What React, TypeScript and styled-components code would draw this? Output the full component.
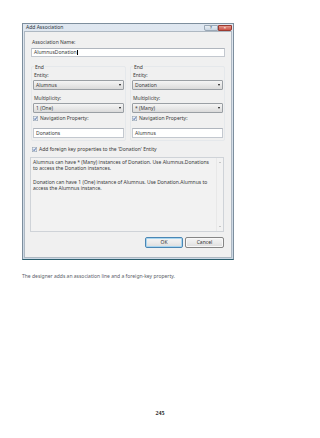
import React from 'react';
import styled, { createGlobalStyle } from 'styled-components';

const Global = createGlobalStyle`
  html, body { margin: 0; padding: 0; background: #ffffff; }
  body { width: 320px; height: 438px; overflow: hidden; font-family: "Noto Sans", "Open Sans", sans-serif; }
  #root { width: 320px; height: 438px; }
`;

const Page = styled.div`
  width: 320px;
  height: 438px;
  box-sizing: border-box;
  padding: 23px 0 22px 0;
  display: flex;
  flex-direction: column;
`;

const Window = styled.div`
  margin-left: 22px;
  width: 212px;
  height: 237px;
  box-sizing: border-box;
  border: 1px solid #7d8e9d;
  border-bottom: 1px solid #2c5f6e;
  background: linear-gradient(#dfe7f0, #cbd8e5);
  display: flex;
  flex-direction: column;
`;

const TitleBar = styled.div`
  height: 7px;
  display: flex;
  align-items: flex-start;
  justify-content: space-between;
  padding: 0 1px 0 3px;
`;

const Title = styled.span`
  font-size: 5px;
  line-height: 7px;
  color: #2a3440;
`;

const Ctrls = styled.div`
  display: flex;
  margin-top: 1px;
`;

const CtrlBtn = styled.div<{ $close?: boolean }>`
  width: 14px;
  height: 6px;
  box-sizing: border-box;
  border: 1px solid ${(p) => (p.$close ? '#9a3a30' : '#9aa8b6')};
  border-radius: ${(p) => (p.$close ? '0 0 2px 0' : '0 0 0 2px')};
  background: ${(p) =>
    p.$close ? 'linear-gradient(#e39a8e, #cc5246)' : 'linear-gradient(#e8eef5, #c9d5e1)'};
  color: ${(p) => (p.$close ? '#ffffff' : '#4e6070')};
  font-size: 4px;
  line-height: 4px;
  text-align: center;
  font-weight: bold;
`;

const Client = styled.div`
  flex: 1;
  margin: 0 1px 1px 1px;
  background: #f0f0f0;
  border: 1px solid #aeb8c2;
  padding: 0 6px 0 6px;
  display: flex;
  flex-direction: column;
  color: #3a3a3a;
`;

const Label = styled.div<{ $mt?: number; $indent?: number }>`
  font-size: 5px;
  line-height: 6px;
  height: 6px;
  white-space: nowrap;
  margin-top: ${(p) => p.$mt ?? 0}px;
  padding-left: ${(p) => p.$indent ?? 1}px;
`;

const TextBox = styled.div<{ $mt?: number; $h?: number }>`
  margin-top: ${(p) => p.$mt ?? 0}px;
  height: ${(p) => p.$h ?? 10}px;
  box-sizing: border-box;
  background: #ffffff;
  border: 1px solid #c3c8cf;
  border-top-color: #b0b6be;
  font-size: 5px;
  line-height: ${(p) => (p.$h ?? 10) - 2}px;
  padding-left: 2px;
  white-space: nowrap;
`;

const Caret = styled.span`
  display: inline-block;
  width: 0.5px;
  height: 5px;
  background: #000;
  vertical-align: middle;
`;

const Groups = styled.div`
  margin-top: 9px;
  display: grid;
  grid-template-columns: 1fr 1fr;
  gap: 4px;
`;

const Group = styled.div`
  border: 1px solid #e5e8eb;
  border-radius: 2px;
  padding: 0 1px 2px 1px;
  display: flex;
  flex-direction: column;
`;

const Legend = styled.div`
  font-size: 5px;
  line-height: 6px;
  height: 6px;
  margin-top: -3px;
  margin-left: 1px;
  padding: 0 1px;
  background: #f0f0f0;
  align-self: flex-start;
`;

const Select = styled.div<{ $mt?: number }>`
  margin-top: ${(p) => p.$mt ?? 0}px;
  height: 10px;
  box-sizing: border-box;
  border: 1px solid #9a9fa4;
  border-radius: 1px;
  background: linear-gradient(#f4f4f4, #e8e8e8 50%, #dadada);
  display: flex;
  align-items: center;
  justify-content: space-between;
  padding: 0 2px 0 2px;
  font-size: 5px;
  white-space: nowrap;
`;

const Arrow = styled.span`
  width: 0;
  height: 0;
  border-left: 1.5px solid transparent;
  border-right: 1.5px solid transparent;
  border-top: 2px solid #111;
`;

const CheckRow = styled.div<{ $mt?: number; $indent?: number }>`
  margin-top: ${(p) => p.$mt ?? 0}px;
  margin-left: ${(p) => p.$indent ?? 0}px;
  height: 6px;
  display: flex;
  align-items: center;
  gap: 2px;
  font-size: 5px;
  white-space: nowrap;
`;

const Description = styled.div`
  margin-top: 5px;
  margin-left: -1px;
  margin-right: 1px;
  height: 75px;
  box-sizing: border-box;
  border: 1px solid #cfd3d8;
  background: #f2f2f2;
  display: flex;
`;

const DescText = styled.div`
  flex: 1;
  padding: 1px 2px;
  font-size: 5px;
  line-height: 6px;
  color: #3a3a3a;
`;

const Para = styled.div`
  margin-bottom: 8px;
  white-space: nowrap;
`;

const Line = styled.div``;

const Scroll = styled.div`
  width: 6px;
  display: flex;
  flex-direction: column;
  justify-content: space-between;
  align-items: center;
  padding: 4px 0 4px 0;
  border-left: 1px solid #e8e8e8;
`;

const ScrollArrow = styled.span<{ $up?: boolean }>`
  width: 0;
  height: 0;
  border-left: 1px solid transparent;
  border-right: 1px solid transparent;
  ${(p) => (p.$up ? 'border-bottom: 1.5px solid #9a9a9a;' : 'border-top: 1.5px solid #9a9a9a;')}
`;

const Buttons = styled.div`
  margin-top: 5px;
  margin-right: 1px;
  display: flex;
  justify-content: flex-end;
  gap: 2px;
`;

const Button = styled.div<{ $default?: boolean; $w: number }>`
  width: ${(p) => p.$w}px;
  height: 11px;
  box-sizing: border-box;
  border: 1px solid ${(p) => (p.$default ? '#4a86b4' : '#858585')};
  border-radius: 2px;
  background: linear-gradient(#f4f4f4, #ebebeb 50%, #dcdcdc);
  box-shadow: ${(p) => (p.$default ? 'inset 0 0 0 1px #a9d6f0' : 'inset 0 0 0 1px #f8f8f8')};
  font-size: 5px;
  line-height: 9px;
  text-align: center;
  color: #333;
`;

const Caption = styled.div`
  margin: 13px 0 0 22px;
  font-size: 5px;
  line-height: 6px;
  color: #5a6068;
  white-space: nowrap;
`;

const PageNumber = styled.div`
  margin-top: auto;
  text-align: center;
  font-family: "Liberation Serif", serif;
  font-weight: bold;
  font-size: 6px;
  line-height: 6px;
  color: #222;
`;

const CheckIcon = () => (
  <svg width="5" height="5" viewBox="0 0 10 10">
    <rect x="0.5" y="0.5" width="9" height="9" fill="#e9eef5" stroke="#8a98a8" />
    <path d="M2.3 5.2 L4.2 7.2 L7.8 2.6" fill="none" stroke="#34589a" strokeWidth="1.8" />
  </svg>
);

type EndProps = { entity: string; mult: string; nav: string };

const EndGroup = ({ entity, mult, nav }: EndProps) => (
  <Group>
    <Legend>End</Legend>
    <Label $mt={2}>Entity:</Label>
    <Select $mt={2}>
      <span>{entity}</span>
      <Arrow />
    </Select>
    <Label $mt={5}>Multiplicity:</Label>
    <Select $mt={2}>
      <span>{mult}</span>
      <Arrow />
    </Select>
    <CheckRow $mt={2}>
      <CheckIcon />
      <span>Navigation Property:</span>
    </CheckRow>
    <TextBox $mt={7} $h={10}>
      {nav}
    </TextBox>
  </Group>
);

export default function App() {
  return (
    <>
      <Global />
      <Page>
        <Window>
          <TitleBar>
            <Title>Add Association</Title>
            <Ctrls>
              <CtrlBtn>?</CtrlBtn>
              <CtrlBtn $close>×</CtrlBtn>
            </Ctrls>
          </TitleBar>
          <Client>
            <Label $mt={7}>Association Name:</Label>
            <TextBox $mt={3} $h={9}>
              AlumnusDonation
              <Caret />
            </TextBox>
            <Groups>
              <EndGroup entity="Alumnus" mult="1 (One)" nav="Donations" />
              <EndGroup entity="Donation" mult="* (Many)" nav="Alumnus" />
            </Groups>
            <CheckRow $mt={5} $indent={1}>
              <CheckIcon />
              <span>Add foreign key properties to the 'Donation' Entity</span>
            </CheckRow>
            <Description>
              <DescText>
                <Para>
                  <Line>Alumnus can have * (Many) instances of Donation. Use Alumnus.Donations</Line>
                  <Line>to access the Donation instances.</Line>
                </Para>
                <Para>
                  <Line>Donation can have 1 (One) instance of Alumnus. Use Donation.Alumnus to</Line>
                  <Line>access the Alumnus instance.</Line>
                </Para>
              </DescText>
              <Scroll>
                <ScrollArrow $up />
                <ScrollArrow />
              </Scroll>
            </Description>
            <Buttons>
              <Button $default $w={38}>OK</Button>
              <Button $w={39}>Cancel</Button>
            </Buttons>
          </Client>
        </Window>
        <Caption>The designer adds an association line and a foreign-key property.</Caption>
        <PageNumber>245</PageNumber>
      </Page>
    </>
  );
}
